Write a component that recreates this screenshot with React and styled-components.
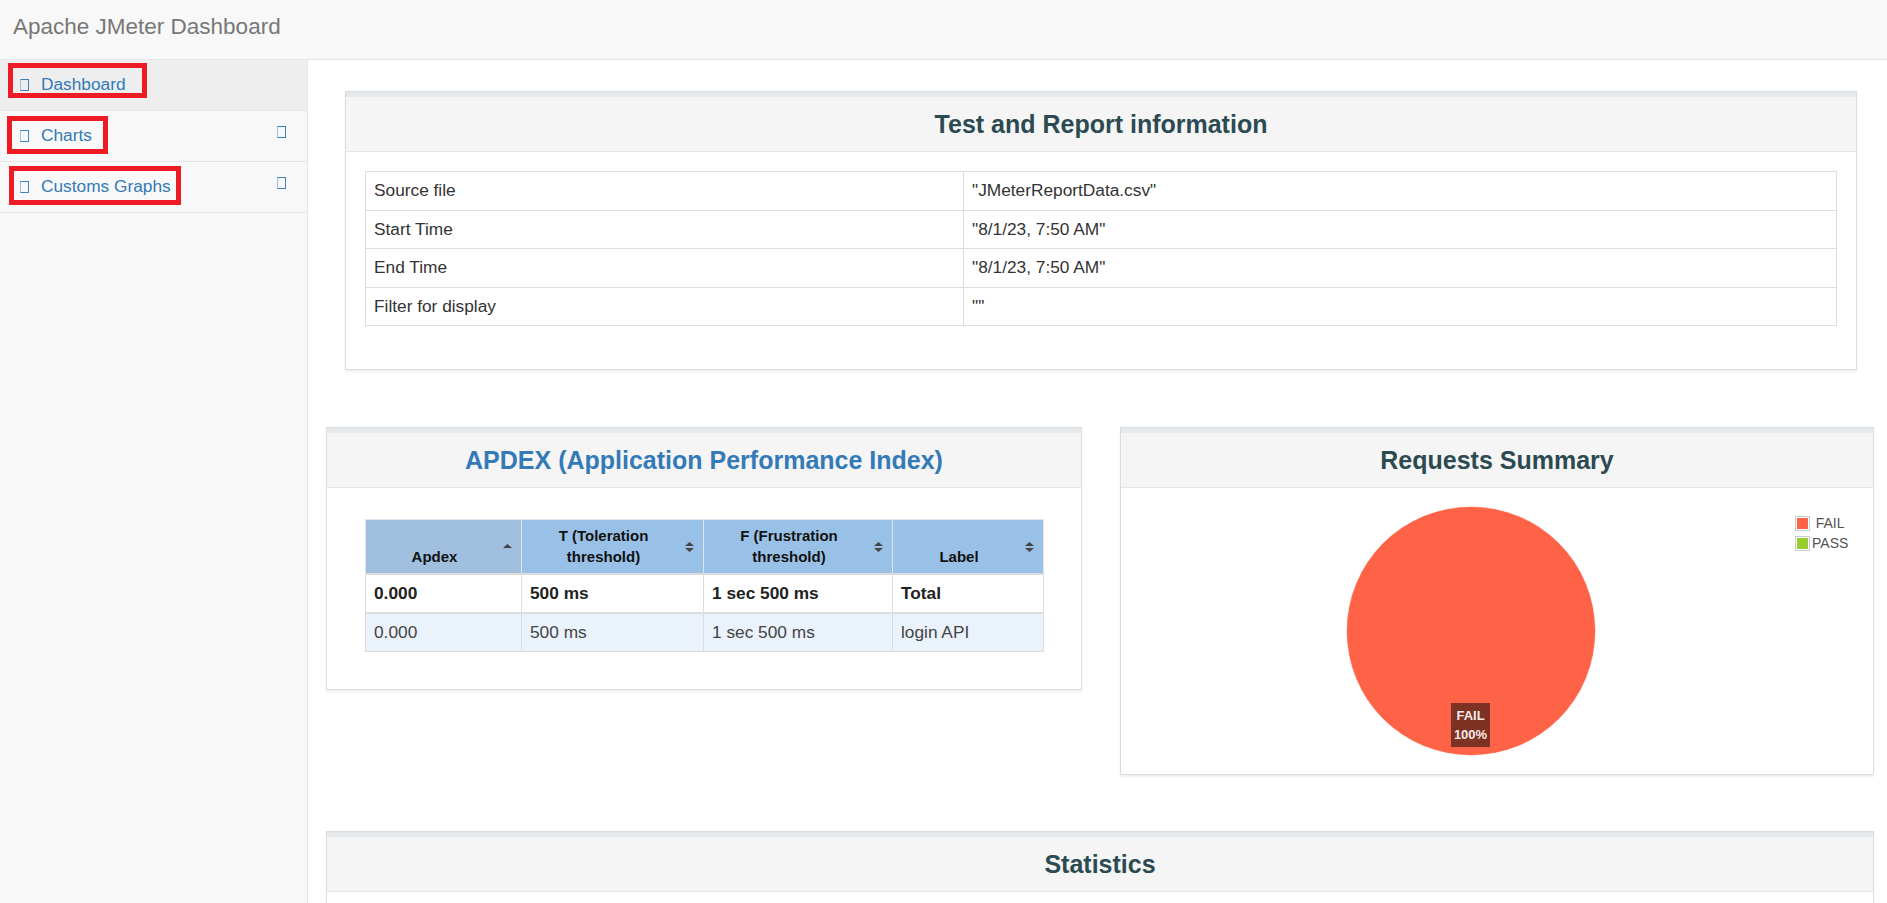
import React from "react";
import styled, { createGlobalStyle } from "styled-components";

const GlobalStyle = createGlobalStyle`
  html, body {
    margin: 0;
    padding: 0;
    height: 100%;
    overflow: hidden;
  }
  body {
    font-family: "Liberation Sans", Arial, sans-serif;
    color: #333;
    background: #fff;
  }
  * { box-sizing: border-box; }
`;

const Page = styled.div`
  display: flex;
  flex-direction: column;
  height: 100vh;
`;

const TopBar = styled.header`
  flex-shrink: 0;
  height: 60px;
  padding: 15px 0 0 13px;
  background: #f8f8f8;
  border-bottom: 1px solid #e7e7e7;
`;

const Brand = styled.span`
  display: block;
  font-size: 22.5px;
  line-height: 24px;
  color: #777;
`;

const Layout = styled.div`
  flex: 1;
  display: flex;
  min-height: 0;
`;

const Sidebar = styled.nav`
  flex-shrink: 0;
  width: 308px;
  background: #f8f8f8;
  border-right: 1px solid #e7e7e7;
`;

const NavItem = styled.div`
  position: relative;
  display: flex;
  align-items: center;
  height: 51px;
  padding: 0 21px 0 20px;
  border-bottom: 1px solid #e7e7e7;
  background: ${(p) => (p.$active ? "#eeeeee" : "transparent")};
`;

const Tofu = styled.span`
  display: inline-block;
  width: 9px;
  height: 12px;
  border: 1px solid #3f82c0;
  border-left-color: #9dbfdf;
`;

const NavText = styled.span`
  margin-left: 12px;
  font-size: 17.3px;
  color: #337ab7;
  padding-bottom: 2px;
`;

const Arrow = styled(Tofu)`
  margin-left: auto;
  align-self: flex-start;
  margin-top: 15px;
`;

const Mark = styled.span`
  position: absolute;
  border: 5px solid #ed1c24;
  pointer-events: none;
`;

const Main = styled.main`
  flex: 1;
  min-width: 0;
  overflow: hidden;
  padding: 31px 13px 0 18px;
  background: #fff;
`;

const Panel = styled.section`
  background: #fff;
  border: 1px solid #dcdcdc;
  box-shadow: 0 2px 2px rgba(0, 0, 0, 0.06);
  margin: ${(p) => p.$margin || "0"};
`;

const Heading = styled.div`
  display: flex;
  align-items: center;
  justify-content: center;
  height: 60px;
  background: #f5f5f5;
  border-top: 5px solid #e6e9ec;
  border-bottom: 1px solid #e6e6e6;
`;

const Title = styled.h3`
  margin: 0;
  font-size: 25px;
  font-weight: bold;
  color: ${(p) => (p.$link ? "#337ab7" : "#2c4a52")};
`;

const Body = styled.div`
  padding: ${(p) => p.$pad || "0"};
  min-height: ${(p) => p.$minH || "0"};
`;

const InfoTable = styled.table`
  width: 100%;
  border-collapse: collapse;
  font-size: 17.3px;
  color: #333;

  td {
    border: 1px solid #dddddd;
    padding: 7px 8px;
    line-height: 23.5px;
  }
  td:first-child {
    width: 598px;
  }
`;

const Columns = styled.div`
  display: grid;
  grid-template-columns: 1fr 1fr;
  column-gap: 38px;
  align-items: start;
  margin-top: 57px;
`;

const ApdexTable = styled.table`
  width: 100%;
  table-layout: fixed;
  border-collapse: collapse;
  border: 1px solid #dddddd;
`;

const Th = styled.th`
  position: relative;
  vertical-align: bottom;
  text-align: center;
  padding: 5px 26px 6px 8px;
  font-size: 15px;
  line-height: 21px;
  font-weight: bold;
  color: #111;
  background: ${(p) => (p.$sorted ? "#a0bfdf" : "#99c1e7")};
  border: 1px solid #dde5ee;
  border-bottom: 2px solid #dddddd;
`;

const Td = styled.td`
  padding: 7px 8px;
  line-height: 23px;
  font-size: 17.3px;
  border: 1px solid #dddddd;
  border-bottom-width: ${(p) => (p.$total ? "2px" : "1px")};
  font-weight: ${(p) => (p.$total ? "bold" : "normal")};
  color: ${(p) => (p.$total ? "#222" : "#444")};
  background: ${(p) => (p.$total ? "#ffffff" : "#eaf2fb")};
`;

const SortIcon = styled.svg`
  position: absolute;
  right: 9px;
  top: 50%;
  transform: translateY(-50%);
`;

const ChartArea = styled.div`
  position: relative;
  height: 250px;
  display: flex;
  justify-content: center;
  padding-right: 52px;
`;

const Legend = styled.div`
  position: absolute;
  left: 674px;
  top: 7px;
  display: grid;
  grid-template-columns: 15px auto;
  grid-auto-rows: 20px;
  column-gap: 2px;
  align-items: center;
`;

const Swatch = styled.span`
  display: block;
  width: 15px;
  height: 15px;
  border: 1px solid #cccccc;
  padding: 1px;

  &::after {
    content: "";
    display: block;
    width: 100%;
    height: 100%;
    background: ${(p) => p.$color};
  }
`;

const LegendText = styled.span`
  font-size: 14px;
  color: #545454;
  text-align: center;
`;

const SliceLabel = styled.div`
  position: absolute;
  left: 330px;
  top: 197px;
  width: 39px;
  padding: 3px 0;
  background: #7d3224;
  color: #f6e9e6;
  font-size: 13px;
  font-weight: bold;
  line-height: 19px;
  text-align: center;
`;

function Sort({ both }) {
  return (
    <SortIcon width="9" height="12" viewBox="0 0 9 12">
      <polygon points={both ? "0,5 4.5,1 9,5" : "0,7 4.5,3 9,7"} fill="#444" />
      {both && <polygon points="0,7 4.5,11 9,7" fill="#444" />}
    </SortIcon>
  );
}

const navItems = [
  { label: "Dashboard", active: true, mark: { left: 8, top: 3, width: 139, height: 35 } },
  { label: "Charts", arrow: true, mark: { left: 7, top: 5, width: 101, height: 38 } },
  { label: "Customs Graphs", arrow: true, mark: { left: 9, top: 4, width: 172, height: 39 } },
];

const info = [
  ["Source file", '"JMeterReportData.csv"'],
  ["Start Time", '"8/1/23, 7:50 AM"'],
  ["End Time", '"8/1/23, 7:50 AM"'],
  ["Filter for display", '""'],
];

const apdexRows = [
  { apdex: "0.000", t: "500 ms", f: "1 sec 500 ms", label: "Total", total: true },
  { apdex: "0.000", t: "500 ms", f: "1 sec 500 ms", label: "login API" },
];

export default function App() {
  return (
    <Page>
      <GlobalStyle />
      <TopBar>
        <Brand>Apache JMeter Dashboard</Brand>
      </TopBar>
      <Layout>
        <Sidebar>
          {navItems.map((item) => (
            <NavItem key={item.label} $active={item.active}>
              <Tofu />
              <NavText>{item.label}</NavText>
              {item.arrow && <Arrow />}
              <Mark style={item.mark} />
            </NavItem>
          ))}
        </Sidebar>

        <Main>
          <Panel $margin="0 17px 0 19px">
            <Heading>
              <Title>Test and Report information</Title>
            </Heading>
            <Body $pad="19px 19px 43px">
              <InfoTable>
                <tbody>
                  {info.map(([k, v]) => (
                    <tr key={k}>
                      <td>{k}</td>
                      <td>{v}</td>
                    </tr>
                  ))}
                </tbody>
              </InfoTable>
            </Body>
          </Panel>

          <Columns>
            <Panel>
              <Heading>
                <Title $link>APDEX (Application Performance Index)</Title>
              </Heading>
              <Body $pad="31px 37px 37px 38px">
                <ApdexTable>
                  <colgroup>
                    <col style={{ width: 156 }} />
                    <col style={{ width: 182 }} />
                    <col style={{ width: 189 }} />
                    <col style={{ width: 151 }} />
                  </colgroup>
                  <thead>
                    <tr>
                      <Th $sorted>
                        Apdex
                        <Sort />
                      </Th>
                      <Th>
                        T (Toleration
                        <br />
                        threshold)
                        <Sort both />
                      </Th>
                      <Th>
                        F (Frustration
                        <br />
                        threshold)
                        <Sort both />
                      </Th>
                      <Th>
                        Label
                        <Sort both />
                      </Th>
                    </tr>
                  </thead>
                  <tbody>
                    {apdexRows.map((r) => (
                      <tr key={r.label}>
                        <Td $total={r.total}>{r.apdex}</Td>
                        <Td $total={r.total}>{r.t}</Td>
                        <Td $total={r.total}>{r.f}</Td>
                        <Td $total={r.total}>{r.label}</Td>
                      </tr>
                    ))}
                  </tbody>
                </ApdexTable>
              </Body>
            </Panel>

            <Panel>
              <Heading>
                <Title>Requests Summary</Title>
              </Heading>
              <Body $pad="18px 0">
                <ChartArea>
                  <svg width="250" height="250" viewBox="0 0 250 250">
                    <circle cx="125" cy="125" r="124.5" fill="#ff6347" stroke="#ffffff" strokeWidth="0.6" />
                  </svg>
                  <SliceLabel>
                    FAIL
                    <br />
                    100%
                  </SliceLabel>
                  <Legend>
                    <Swatch $color="#ff6347" />
                    <LegendText>FAIL</LegendText>
                    <Swatch $color="#9acd32" />
                    <LegendText>PASS</LegendText>
                  </Legend>
                </ChartArea>
              </Body>
            </Panel>
          </Columns>

          <Panel $margin="56px 0 0">
            <Heading>
              <Title>Statistics</Title>
            </Heading>
            <Body $minH="300px" />
          </Panel>
        </Main>
      </Layout>
    </Page>
  );
}
